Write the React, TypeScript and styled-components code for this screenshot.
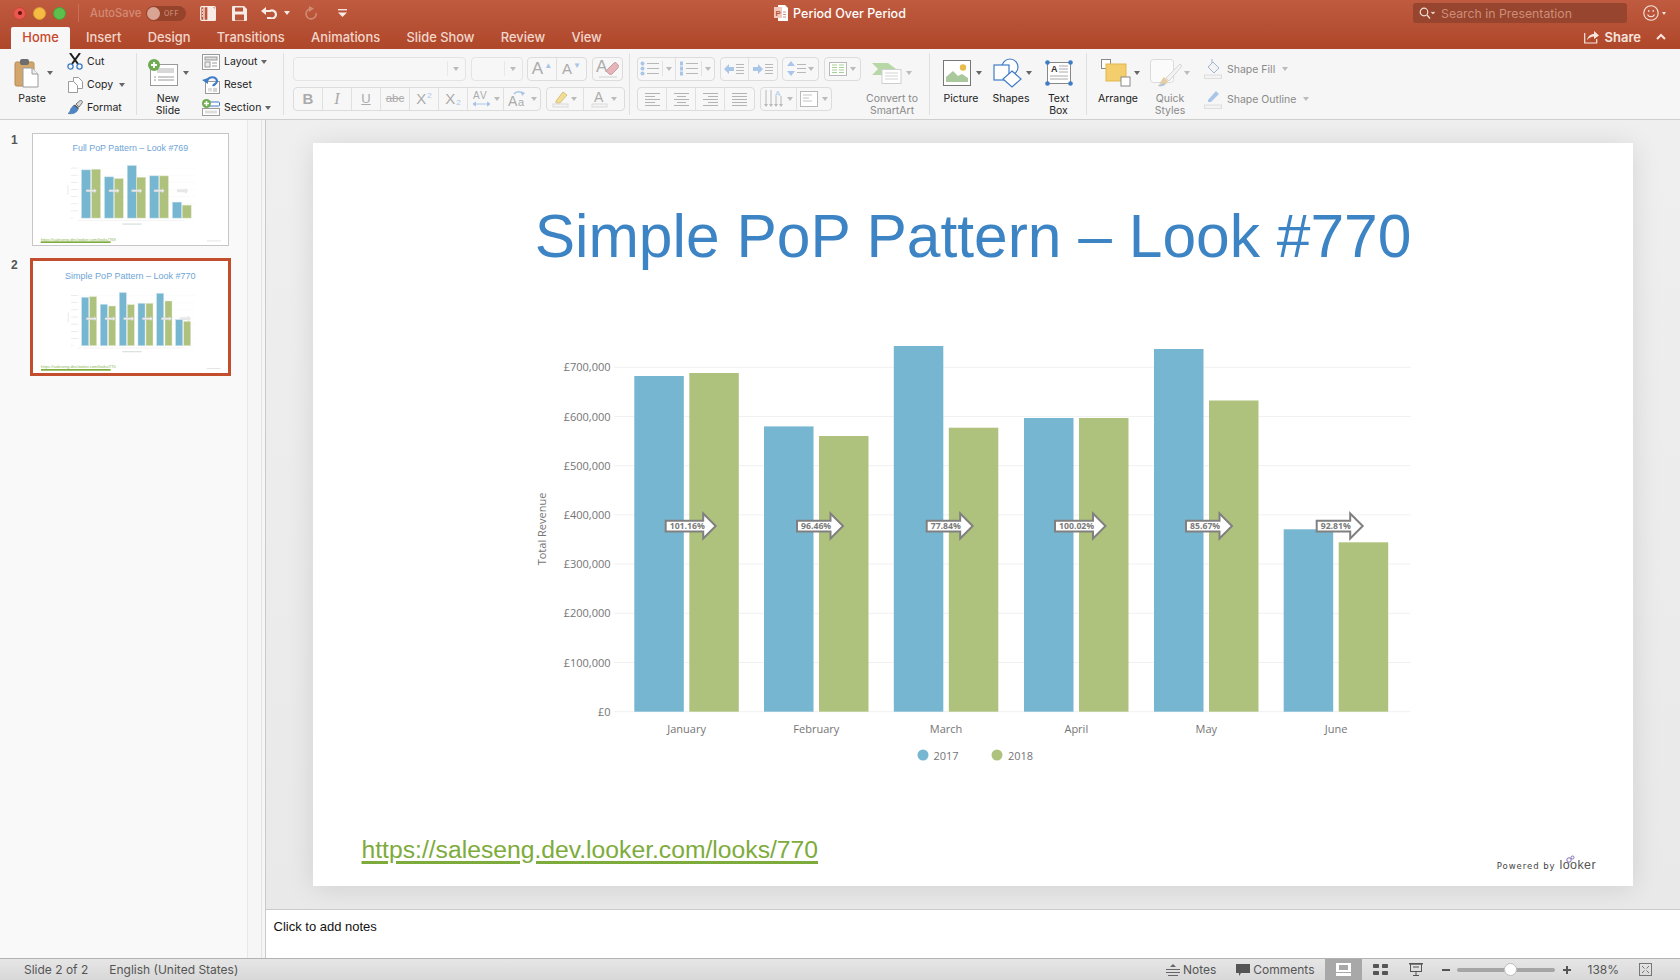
import React from "react";
import styled, { createGlobalStyle } from "styled-components";

const UI = `"Inter", "Liberation Sans", sans-serif`;

const Global = createGlobalStyle`
  html, body { margin: 0; padding: 0; width: 1680px; height: 980px; overflow: hidden; background: #f5f5f5; }
  * { box-sizing: border-box; }
  svg { display: block; flex: none; }
`;

const Page = styled.div`
  width: 1680px; height: 980px; display: flex; flex-direction: column; overflow: hidden;
  font-family: ${UI}; color: #222;
`;

/* ---------- Title bar ---------- */
const TitleBar = styled.header`
  height: 49px; flex: none; display: flex; flex-direction: column;
  background: linear-gradient(#bf5b40, #af472a);
`;
const TitleRow = styled.div`
  height: 27px; display: grid; grid-template-columns: 1fr auto 1fr; align-items: center; padding-bottom: 1px;
`;
const QuickBar = styled.div`display: flex; align-items: center; padding-left: 13px;`;
const Light = styled.span<{ $c: string; $b: string }>`
  width: 13px; height: 13px; border-radius: 50%; background: ${p => p.$c}; border: 1px solid ${p => p.$b};
  margin-right: 7px; display: flex; align-items: center; justify-content: center; flex: none;
  &:nth-child(3) { margin-right: 12px; }
`;
const LightDot = styled.span`width: 4px; height: 4px; border-radius: 50%; background: #6d0f0a;`;
const QuickDivider = styled.span`width: 1px; height: 18px; background: #c96f56; margin-right: 11px;`;
const AutoSave = styled.span`font-size: 11.2px; color: #d38b75; width: 56px; font-weight: 500;`;
const Toggle = styled.span`
  width: 40px; height: 15px; border-radius: 8px; background: #96432b; display: flex; align-items: center; gap: 4px;
  padding-left: 1px; font-size: 7px; color: #d79a87; letter-spacing: .5px; margin-right: 14px;
`;
const ToggleKnob = styled.span`width: 13px; height: 13px; border-radius: 50%; background: #d9a494;`;
const QuickIcon = styled.span<{ $mr: number }>`display: flex; margin-right: ${p => p.$mr}px;`;
const DocTitle = styled.div`
  display: flex; align-items: center; gap: 5px; color: #fff; font-size: 12.5px; font-weight: 500;
`;
const TitleRight = styled.div`display: flex; align-items: center; justify-content: flex-end; padding-right: 14px;`;
const SearchBox = styled.div`
  width: 214px; height: 20px; border-radius: 3px; background: #97452e; display: flex; align-items: center;
  padding-left: 6px; gap: 6px; color: #cf8d79; font-size: 12.3px; margin-right: 16px;
`;
const TabRow = styled.nav`height: 22px; display: flex; align-items: flex-end; padding-left: 11px; position: relative;`;
const Tab = styled.span<{ $active?: boolean }>`
  height: 22px; display: flex; align-items: center; font-size: 12.9px; font-weight: 500; padding-bottom: 2px;
  color: ${p => (p.$active ? "#c8482a" : "#f2d6cb")};
  background: ${p => (p.$active ? "#f7f7f7" : "transparent")};
  border-radius: 2px 2px 0 0;
  width: ${p => (p.$active ? "59px" : "auto")};
  justify-content: center;
  margin-right: ${p => (p.$active ? "16px" : "26.3px")};
`;
const ShareBox = styled.div`
  margin-left: auto; display: flex; align-items: center; color: #f7e6df; font-size: 13px; font-weight: 600;
  height: 22px; padding-right: 14px; padding-bottom: 3px; gap: 6px;
`;

/* ---------- Ribbon ---------- */
const Ribbon = styled.section`
  height: 71px; flex: none; display: flex; align-items: flex-start; background: #f6f6f6; border-bottom: 1px solid #cfcfcf;
`;
const Group = styled.div<{ $w: number; $pl?: number }>`
  width: ${p => p.$w}px; flex: none; display: flex; align-items: flex-start; padding-left: ${p => p.$pl ?? 0}px;
`;
const Separator = styled.span`width: 1px; height: 62px; margin-top: 4px; background: #e0e0e0; flex: none;`;
const BigButton = styled.div<{ $w: number }>`
  width: ${p => p.$w}px; flex: none; display: flex; flex-direction: column; padding-top: 4px;
`;
const IconRow = styled.div<{ $inset: number }>`
  height: 40px; display: flex; align-items: center; padding-left: ${p => p.$inset}px; padding-bottom: 1px;
`;
const BigLabel = styled.span<{ $off?: boolean }>`
  display: block; text-align: center; font-size: 10.5px; line-height: 12px; white-space: pre-line;
  color: ${p => (p.$off ? "#8a8a8a" : "#222")};
`;
const SmallStack = styled.div<{ $ml: number }>`margin-left: ${p => p.$ml}px; padding-top: 1px; display: flex; flex-direction: column;`;
const SmallRow = styled.div<{ $gap: number }>`
  height: 23px; display: flex; align-items: center; gap: ${p => p.$gap}px; font-size: 10.5px; color: #222;
`;
const SmallIconBox = styled.span<{ $w: number }>`width: ${p => p.$w}px; display: flex; justify-content: center; flex: none;`;
const CaretGlyph = styled.svg<{ $ml: number }>`margin-left: ${p => p.$ml}px;`;
const ControlStack = styled.div`padding-top: 8px; display: flex; flex-direction: column; gap: 6.5px;`;
const ControlRow = styled.div`display: flex; gap: 4.5px; height: 23.5px;`;
const Combo = styled.div<{ $w: number }>`
  width: ${p => p.$w}px; height: 100%; border: 1px solid #e4e4e4; border-radius: 4px; background: #f7f7f7;
  display: flex; justify-content: flex-end; align-items: center; padding-right: 6px;
`;
const ComboDivider = styled.span`width: 1px; height: 15px; background: #e8e8e8; margin-right: 5px;`;
const BtnGroup = styled.div`
  display: flex; height: 100%; border: 1px solid #dcdcdc; border-radius: 4px; overflow: hidden; background: #f7f7f7;
`;
const Cell = styled.span<{ $w: number; $serif?: boolean }>`
  width: ${p => p.$w}px; height: 100%; display: flex; align-items: center; justify-content: center; gap: 1px;
  border-right: 1px solid #e0e0e0; color: #ababab; font-size: 15px; flex: none; line-height: 1;
  font-family: ${p => (p.$serif ? `"Liberation Serif", serif` : `"Liberation Sans", sans-serif`)};
  &:last-child { border-right: 0; }
`;
const CellDivider = styled.span`width: 1px; height: 15px; background: #e2e2e2; margin: 0 1px 0 2px; flex: none;`;
const GrowA = styled.span`font-size: 17px;`;
const Bold = styled.b`font-size: 15px;`;
const Ital = styled.i`font-size: 16px;`;
const Under = styled.u`font-size: 13px;`;
const Strike = styled.s`font-size: 11.5px;`;
const Sup = styled.span`font-size: 8px; color: #a9c6e8; align-self: flex-start; margin-top: 4px;`;
const Sub = styled.span`font-size: 8px; color: #a9c6e8; align-self: flex-end; margin-bottom: 3px;`;
const ShapeStack = styled.div`margin: 5px 0 0 12px; display: flex; flex-direction: column;`;
const ShapeRow = styled.div`
  height: 30px; display: flex; align-items: center; gap: 5px; font-size: 10.5px; color: #8a8a8a;
`;

/* ---------- Main ---------- */
const Main = styled.main`flex: 1; display: flex; min-height: 0;`;
const Panel = styled.aside`
  width: 248px; flex: none; background: #f9f9f9; border-right: 1px solid #e8e8e8; padding: 12.5px 0 0 11px;
  display: flex; flex-direction: column; gap: 12.5px;
`;
const ThumbRow = styled.div`display: flex; align-items: flex-start;`;
const ThumbNumber = styled.span`
  width: 19px; font-size: 12px; font-weight: 700; color: #555;
  font-family: "Liberation Sans", sans-serif; line-height: 14px;
`;
const Thumb = styled.div<{ $selected?: boolean }>`
  width: ${p => (p.$selected ? 201 : 197)}px; height: ${p => (p.$selected ? 118 : 113)}px;
  margin-left: ${p => (p.$selected ? 0 : 2)}px; background: #fff;
  border: ${p => (p.$selected ? "3px solid #c24e2e" : "1px solid #c6c6c6")};
`;
const Gutter = styled.div`width: 18px; flex: none; background: #f6f6f6; border-right: 1px solid #c9c9c9;`;
const GutterLine = styled.div`width: 14px; height: 100%; border-right: 1px solid #e4e4e4;`;
const Workspace = styled.div`flex: 1; display: flex; flex-direction: column; min-width: 0;`;
const Canvas = styled.div`
  flex: 1; min-height: 0; display: flex; align-items: center; justify-content: center;
  background: linear-gradient(#efefef, #e9e9e9); 
`;
const Slide = styled.article`
  width: 1320px; height: 743px; flex: none; background: #fff; display: flex; flex-direction: column;
  box-shadow: 0 2px 26px rgba(0, 0, 0, .11);
`;
const SlideTitle = styled.h1`
  margin: 57px 0 28px; height: 72px; line-height: 72px; text-align: center; font-weight: 400; font-size: 60.5px;
  font-family: "Liberation Sans", Arial, sans-serif; color: #3d84c5;
`;
const ChartSvg = styled.svg`width: 1320px; height: 470px;`;
const AxisText = styled.text`font-family: "Open Sans", sans-serif; font-size: 11px; fill: #757575;`;
const ArrowText = styled.text`font-family: "Open Sans", sans-serif; font-size: 8.7px; font-weight: 700; fill: #7a7a7a;`;
const SlideFooter = styled.footer`
  margin-top: 60px; height: 40px; display: flex; justify-content: space-between; align-items: flex-end;
  padding: 0 37px 0 48.5px;
`;
const SlideLink = styled.a`
  font-family: "Liberation Sans", Arial, sans-serif; font-size: 24.7px; line-height: 40px; color: #7dab3c;
  text-decoration: underline; text-decoration-thickness: 3px; text-underline-offset: 3px;
`;
const Powered = styled.div`
  display: flex; align-items: baseline; gap: 4px; font-family: "DejaVu Sans", sans-serif; font-size: 8.5px;
  letter-spacing: .95px; color: #444; font-weight: 500; height: 10px; line-height: 10px; position: relative;
`;
const LookerWord = styled.span`font-family: "Liberation Sans", sans-serif; font-size: 12.5px; color: #555; letter-spacing: .4px;`;
const LookerMark = styled.svg`position: absolute; right: 20px; top: -5px;`;
const NotesBar = styled.div`
  height: 49px; flex: none; background: #fff; border-top: 1px solid #cbcbcb; padding: 9px 0 0 7.5px;
  font-family: "Liberation Sans", sans-serif; font-size: 13px; color: #111; line-height: 16px;
`;

/* ---------- Status bar ---------- */
const StatusBar = styled.footer`
  height: 22px; flex: none; display: flex; justify-content: space-between; align-items: stretch;
  background: linear-gradient(#e6e6e6, #d8d8d8); border-top: 1px solid #b2b2b2; color: #555; font-size: 12px;
`;
const StatusSide = styled.div<{ $pl?: number; $pr?: number }>`
  display: flex; align-items: center; padding: 0 ${p => p.$pr ?? 0}px 0 ${p => p.$pl ?? 0}px;
`;
const StatusItem = styled.span<{ $ml?: number }>`
  margin-left: ${p => p.$ml ?? 0}px; display: flex; align-items: center; gap: 3px; white-space: nowrap; flex: none;
`;
const ViewActive = styled.span`
  width: 37px; height: 100%; margin-left: 10px; background: #a8a8a8; display: flex; align-items: center; justify-content: center; flex: none;
`;
const ZoomTrack = styled.span`
  width: 98px; height: 4px; border-radius: 2px; background: #a5a5a5; margin-left: 7px; position: relative; flex: none;
`;
const ZoomKnob = styled.span`
  position: absolute; left: 47px; top: -4.5px; width: 13px; height: 13px; border-radius: 50%; background: #fff; border: 1px solid #bdbdbd;
`;

/* ---------- Icons ---------- */
const Caret = ({ ml = 3, c = "#666" }: { ml?: number; c?: string }) => (
  <CaretGlyph $ml={ml} width="6" height="4" viewBox="0 0 6 4"><path d="M0 0h6L3 4z" fill={c} /></CaretGlyph>
);

const Paste = () => (
  <svg width="26" height="30" viewBox="0 0 26 30">
    <rect x="1" y="4" width="19" height="24" rx="1.5" fill="#d3a76b" stroke="#b58a50" />
    <rect x="6" y="1" width="9" height="6" rx="2" fill="#6d6d6d" />
    <path d="M9 10h9l6 6v13H9z" fill="#fff" stroke="#9a9a9a" /><path d="M18 10v6h6" fill="#eee" stroke="#9a9a9a" />
  </svg>
);
const Cut = () => (
  <svg width="16" height="17" viewBox="0 0 16 17">
    <path d="M3 0l8 11M13 0L5 11" stroke="#1d1d1d" strokeWidth="2" />
    <circle cx="3.5" cy="13.5" r="2.6" fill="none" stroke="#3e7cc6" strokeWidth="1.3" />
    <circle cx="12.5" cy="13.5" r="2.6" fill="none" stroke="#3e7cc6" strokeWidth="1.3" />
  </svg>
);
const CopyI = () => (
  <svg width="15" height="16" viewBox="0 0 15 16" fill="#fff" stroke="#9b9b9b">
    <path d="M5.5.5h5l4 4v7h-9z" /><path d="M.5 4.5h5l4 4v7h-9z" />
  </svg>
);
const Brush = () => (
  <svg width="17" height="15" viewBox="0 0 17 15">
    <path d="M9 4l4-3.5c1-.8 3 1 2.3 2.2L12 7z" fill="#d8d8d8" stroke="#777" />
    <path d="M8 4.5L12 8l-1 1.5-4.5-4z" fill="#555" />
    <path d="M6.5 5.5L11 9.500c-1 3-5 5-10 4 2-1 2-3 3-5z" fill="#4d86c6" stroke="#3a6da8" strokeWidth=".6" />
  </svg>
);
const NewSlideI = () => (
  <svg width="30" height="27" viewBox="0 0 30 27">
    <rect x="2.500" y="5.500" width="27" height="21" fill="#fff" stroke="#9a9a9a" />
    <rect x="9" y="9" width="17" height="5" fill="#d7d7d7" />
    <path d="M6 18h2M10 18h16M6 21h2M10 21h16" stroke="#9a9a9a" />
    <circle cx="6" cy="6" r="6" fill="#6fab50" />
    <path d="M6 3v6M3 6h6" stroke="#fff" strokeWidth="1.8" />
  </svg>
);
const LayoutI = () => (
  <svg width="18" height="16" viewBox="0 0 18 16" fill="none" stroke="#9a9a9a">
    <rect x=".5" y=".5" width="17" height="15" fill="#fff" />
    <rect x="3" y="3" width="12" height="3" fill="#ddd" /><rect x="3" y="8" width="5" height="5" fill="#eee" /><path d="M10 9h5M10 12h5" />
  </svg>
);
const ResetI = () => (
  <svg width="18" height="18" viewBox="0 0 18 18">
    <rect x="3.500" y="5.500" width="14" height="12" fill="#fff" stroke="#9a9a9a" />
    <rect x="6" y="12" width="4" height="3.500" fill="#ddd" /><path d="M11 13h4M11 15h4" stroke="#aaa" />
    <path d="M5 5c2-5 9-5 10 0 0 3-3 3-4 5" fill="none" stroke="#3e7cc6" strokeWidth="2.200" />
    <path d="M0 4l6-2v6z" fill="#3e7cc6" />
  </svg>
);
const SectionI = () => (
  <svg width="18" height="17" viewBox="0 0 18 17">
    <rect x="5" y="3" width="12.500" height="4" rx="1" fill="#fff" stroke="#3e7cc6" />
    <rect x=".5" y="9.500" width="17" height="7" fill="#fff" stroke="#9a9a9a" /><rect x="3" y="11.500" width="12" height="3" fill="#ddd" />
    <circle cx="4.500" cy="4.500" r="4.500" fill="#6fab50" /><path d="M4.500 2v5M2 4.500h5" stroke="#fff" strokeWidth="1.500" />
  </svg>
);
const Lines = ({ rows, w = 15, c = "#b3b3b3" }: { rows: [number, number, number][]; w?: number; c?: string }) => (
  <svg width={w} height="14" viewBox={`0 0 ${w} 14`} stroke={c}>
    {rows.map(([x1, x2, y], i) => <path key={i} d={`M${x1} ${y + .5}H${x2}`} />)}
  </svg>
);
const BulletI = ({ n }: { n?: boolean }) => (
  <svg width="19" height="15" viewBox="0 0 19 15">
    {[2.5, 7.5, 12.5].map(y => n
      ? <rect key={y} x="1" y={y - 2} width="3" height="4" fill="#a9c6e8" />
      : <circle key={y} cx="2.500" cy={y} r="2" fill="#a9c6e8" />)}
    <path d="M7 2.500h12M7 7.500h12M7 12.500h12" stroke="#b8b8b8" />
  </svg>
);
const IndentI = ({ right }: { right?: boolean }) => (
  <svg width="20" height="12" viewBox="0 0 20 12">
    <path d={right ? "M0 4h5V1l5 5-5 5V8H0z" : "M10 4H5V1L0 6l5 5V8h5z"} fill="#a9c6e8" />
    <path d="M12 1.500h8M12 4.500h8M12 7.500h8M12 10.500h8" stroke="#b8b8b8" />
  </svg>
);
const SpacingI = () => (
  <svg width="19" height="15" viewBox="0 0 19 15">
    <path d="M4 0l4 5H0zM4 15l4-5H0z" fill="#a9c6e8" /><path d="M10 3.500h9M10 7.500h9M10 11.500h9" stroke="#b8b8b8" />
  </svg>
);
const ColumnsI = () => (
  <svg width="18" height="14" viewBox="0 0 18 14">
    <rect x=".5" y=".5" width="17" height="13" fill="#fff" stroke="#b8b8b8" />
    <path d="M3 3h5M3 5.500h5M3 8h5M3 10.500h5M10 3h5M10 5.500h5M10 8h5M10 10.500h5" stroke="#a7cf93" />
  </svg>
);
const VAlignI = () => (
  <svg width="22" height="20" viewBox="0 0 22 20">
    <path d="M2 1v15M7 1v15M12 7v9M17 7v9" stroke="#b8b8b8" />
    <path d="M0 15h4l-2 3zM5 15h4l-2 3zM10 15h4l-2 3zM15 15h4l-2 3z" fill="#b8b8b8" />
    <text x="11" y="6.500" fontSize="8" fill="#a9c6e8" fontFamily="Liberation Sans">A</text>
  </svg>
);
const TextDirI = () => (
  <svg width="18" height="16" viewBox="0 0 18 16">
    <rect x=".5" y=".5" width="17" height="15" fill="#fff" stroke="#b8b8b8" /><path d="M3 4h9M3 7h6M3 10h9" stroke="#c3c3c3" />
  </svg>
);
const HighlightI = () => (
  <svg width="18" height="18" viewBox="0 0 18 18">
    <path d="M4 11l7-9 4 3-7 8H4z" fill="#f2dd95" stroke="#d6c27d" />
    <rect x="1" y="14" width="15" height="3" fill="#f3f3f3" stroke="#d9d9d9" />
  </svg>
);
const FontColorI = () => (
  <svg width="17" height="18" viewBox="0 0 17 18">
    <text x="3" y="12" fontSize="14" fill="#ababab" fontFamily="Liberation Sans">A</text>
    <rect x="1" y="14" width="15" height="3" fill="#f3f3f3" stroke="#d9d9d9" />
  </svg>
);
const SpacingAV = () => (
  <svg width="19" height="18" viewBox="0 0 19 18">
    <text x="1" y="9" fontSize="10" letterSpacing="1" fill="#ababab" fontFamily="Liberation Sans">AV</text>
    <path d="M1 14h17M1 14l2.500-2v4zM18 14l-2.500-2v4z" stroke="#a9c6e8" fill="#a9c6e8" />
  </svg>
);
const CaseI = () => (
  <svg width="20" height="18" viewBox="0 0 20 18">
    <text x="0" y="16" fontSize="14" fill="#ababab" fontFamily="Liberation Sans">A</text>
    <text x="10" y="16" fontSize="11" fill="#ababab" fontFamily="Liberation Sans">a</text>
    <path d="M6 4c2-3 7-3 9 0" fill="none" stroke="#a9c6e8" strokeWidth="1.400" /><path d="M13 1l4 2-3 3z" fill="#a9c6e8" />
  </svg>
);
const EraserI = () => (
  <svg width="24" height="21" viewBox="0 0 24 21">
    <text x="1" y="14" fontSize="17" fill="#ababab" fontFamily="Liberation Sans">A</text>
    <path d="M12 12l7-7c1-1 3 0 4 2s0 3-1 4l-5 5c-1 1-3 0-4-1s-2-2-1-3z" fill="#e6b4b9" stroke="#c79aa0" />
    <path d="M4 19h18" stroke="#cfcfcf" />
  </svg>
);
const SmartArtI = () => (
  <svg width="30" height="22" viewBox="0 0 30 22">
    <path d="M0 1h16l8 6-8 6H0l6-6z" fill="#b8d7a6" />
    <rect x="10" y="7.500" width="19" height="14" fill="#fff" stroke="#cfcfcf" />
    <path d="M13 11h13M13 14h13M13 17h13" stroke="#d3d3d3" />
  </svg>
);
const PictureI = () => (
  <svg width="28" height="26" viewBox="0 0 28 26">
    <rect x=".5" y=".5" width="27" height="25" fill="#fff" stroke="#777" />
    <circle cx="20" cy="7.500" r="3.200" fill="#e8bb4a" />
    <path d="M3 22v-5l7-6 5 5 4-2 6 4v4z" fill="#a9c89b" />
  </svg>
);
const ShapesI = () => (
  <svg width="29" height="30" viewBox="0 0 29 30" fill="#fff" stroke="#3e7cc6" strokeWidth="1.200">
    <circle cx="17" cy="9" r="8" />
    <rect x="1" y="7" width="15" height="15" />
    <path d="M19 13l9 8-9 8-9-8z" />
  </svg>
);
const TextBoxI = () => (
  <svg width="28" height="26" viewBox="0 0 28 26">
    <rect x="2.500" y="2.500" width="23" height="21" fill="#fff" stroke="#888" />
    <text x="6" y="12" fontSize="9" fontWeight="700" fill="#333" fontFamily="Liberation Sans">A</text>
    <path d="M14 6h9M14 9h9M14 12h9M5 16h18M5 19h18" stroke="#aaa" />
    {[[2.500, 2.500], [25.500, 2.500], [2.500, 23.500], [25.500, 23.500]].map(([x, y]) => <circle key={`${x}${y}`} cx={x} cy={y} r="2.300" fill="#3e7cc6" />)}
  </svg>
);
const ArrangeI = () => (
  <svg width="30" height="28" viewBox="0 0 30 28">
    <rect x=".5" y=".5" width="9" height="9" fill="#fff" stroke="#888" />
    <rect x="5" y="5" width="20" height="17" fill="#f4ce6c" stroke="#e1b750" />
    <rect x="20" y="18" width="9" height="9" fill="#fff" stroke="#888" />
  </svg>
);
const QuickI = () => (
  <svg width="34" height="28" viewBox="0 0 34 28">
    <rect x=".5" y=".5" width="23" height="23" rx="3" fill="#fbfbfb" stroke="#dadada" />
    <path d="M32 7L19 22l-3-3L30 5z" fill="#f3f3f3" stroke="#d6d6d6" />
    <path d="M14 18l4 4c-1 4-5 5-10 5 2-2 3-6 6-9z" fill="#e5cda4" />
    <path d="M8 27c3-1 4-2 6-3l1 2c-2 1-5 2-7 1z" fill="#a9c6e8" />
  </svg>
);
const FillI = () => (
  <svg width="18" height="20" viewBox="0 0 18 20">
    <path d="M4 8l5-5 6 6-5 5z" fill="#f3f3f3" stroke="#9fb6d3" /><path d="M8 4V0" stroke="#9fb6d3" />
    <rect x=".5" y="16" width="17" height="3.500" fill="#f3f3f3" stroke="#dedede" />
  </svg>
);
const OutlineI = () => (
  <svg width="18" height="20" viewBox="0 0 18 20">
    <path d="M4 11L12 2l3 3-8 8H4z" fill="#a9c6e8" />
    <rect x=".5" y="16" width="17" height="3.500" fill="#f3f3f3" stroke="#dedede" />
  </svg>
);
const White = "#f8ece7";
const SidebarI = () => (
  <svg width="16" height="15" viewBox="0 0 16 15" fill="none" stroke={White} strokeWidth="1.300">
    <rect x=".7" y=".7" width="14.600" height="13.600" rx="1" /><path d="M4 1v13M2 4h1M2 7h1M2 10h1" /><path d="M8 1h4l3 3v10H8z" fill={White} />
  </svg>
);
const SaveI = () => (
  <svg width="15" height="15" viewBox="0 0 15 15">
    <path d="M1 0h11l3 3v11a1 1 0 0 1-1 1H1a1 1 0 0 1-1-1V1a1 1 0 0 1 1-1z" fill={White} />
    <rect x="3" y="1.500" width="8" height="4" fill="#b9553a" /><rect x="3" y="8.500" width="9" height="6" fill="#b9553a" />
  </svg>
);
const UndoI = () => (
  <svg width="16" height="12" viewBox="0 0 16 12" fill="none">
    <path d="M0 4l5-4v8z" fill={White} /><path d="M4 4h5a4 4 0 1 1 0 7H6" stroke={White} strokeWidth="2.200" />
  </svg>
);
const RedoI = () => (
  <svg width="13" height="14" viewBox="0 0 13 14" fill="none">
    <path d="M8 3a5 5 0 1 0 4 4" stroke="#cf8a74" strokeWidth="1.600" /><path d="M5 0l5 2.500L5 6z" fill="#cf8a74" />
  </svg>
);
const CustomI = () => (
  <svg width="9" height="8" viewBox="0 0 9 8"><path d="M0 .7h9" stroke={White} strokeWidth="1.300" /><path d="M0 3.500h9L4.500 8z" fill={White} /></svg>
);
const PptI = () => (
  <svg width="14" height="16" viewBox="0 0 14 16">
    <path d="M4 0h7l3 3v13H4z" fill="#fff" /><rect x="0" y="2" width="8" height="11" fill="#f1c9bc" />
    <text x="1.500" y="10.500" fontSize="8" fontWeight="700" fill="#b9553a" fontFamily="Liberation Sans">P</text>
    <path d="M9 7h3M9 9.500h3M9 12h3" stroke="#c98" />
  </svg>
);
const SearchI = () => (
  <svg width="16" height="12" viewBox="0 0 16 12" fill="none" stroke="#f1e1da" strokeWidth="1.200">
    <circle cx="5" cy="5" r="3.800" /><path d="M8 8l3 3.500M12.500 5l1.500 1.500L15.500 5" />
  </svg>
);
const Smiley = () => (
  <svg width="23" height="16" viewBox="0 0 23 16" fill="none" stroke="#f6e6df" strokeWidth="1.100">
    <circle cx="8" cy="8" r="7.200" /><path d="M4.500 9.500c1.500 3 5.500 3 7 0" /><path d="M5.800 5v2M10.200 5v2" />
    <path d="M19 7h4l-2 3z" fill="#f6e6df" stroke="none" />
  </svg>
);
const ShareI = () => (
  <svg width="15" height="14" viewBox="0 0 15 14" fill="none">
    <path d="M.7 3v10h12V9" stroke="#f7e6df" strokeWidth="1.200" />
    <path d="M3 10c1-4 4-6 7-6V1l5 4.500L10 9V6.500C7 6.500 5 8 3 10z" fill="#f7e6df" />
  </svg>
);
const ChevronGlyph = styled.svg`margin-left: 9px;`;
const Chevron = () => (
  <ChevronGlyph width="10" height="7" viewBox="0 0 10 7" fill="none"><path d="M1 6l4-4 4 4" stroke="#f7e6df" strokeWidth="2" /></ChevronGlyph>
);
const NotesI = () => (
  <svg width="14" height="12" viewBox="0 0 14 12" stroke="#666"><path d="M7 0l3 3H4z" fill="#666" stroke="none" /><path d="M0 5.500h14M0 8.500h14M2 11.500h10" /></svg>
);
const CommentI = () => (
  <svg width="14" height="12" viewBox="0 0 14 12"><path d="M0 0h14v9H5l-2 3V9H0z" fill="#555" /></svg>
);
const NormalI = () => (
  <svg width="15" height="13" viewBox="0 0 15 13"><rect width="15" height="13" fill="#fff" /><rect x="3" y="2" width="9" height="5" fill="#a8a8a8" /><rect y="9" width="15" height="1" fill="#a8a8a8" /></svg>
);
const GridI = () => (
  <svg width="15" height="11" viewBox="0 0 15 11" fill="#555"><rect width="6" height="4" rx=".8" /><rect x="9" width="6" height="4" rx=".8" /><rect y="7" width="6" height="4" rx=".8" /><rect x="9" y="7" width="6" height="4" rx=".8" /></svg>
);
const PresentI = () => (
  <svg width="14" height="13" viewBox="0 0 14 13" fill="none" stroke="#555"><path d="M0 .7h14" strokeWidth="1.400" /><rect x="1.500" y="1" width="11" height="7.500" /><path d="M4 4h6" /><path d="M7 8.500v4M4 12.500h6" /></svg>
);
const Minus = () => <svg width="8" height="8" viewBox="0 0 8 8"><path d="M0 4h8" stroke="#555" strokeWidth="2" /></svg>;
const Plus = () => <svg width="8" height="8" viewBox="0 0 8 8"><path d="M0 4h8M4 0v8" stroke="#555" strokeWidth="2" /></svg>;
const FitI = () => (
  <svg width="13" height="13" viewBox="0 0 13 13" fill="none" stroke="#777"><rect x=".5" y=".5" width="12" height="12" /><path d="M3 3l2.500 2.500M10 3L7.500 5.500M3 10l2.500-2.500M10 10L7.500 7.500" /></svg>
);

/* ---------- Chart ---------- */
const blueTops = [376, 426.4, 346, 418, 349, 529.3];
const greenTops = [373, 436, 427.7, 418, 400.5, 542.3];
const lefts = [634.3, 764, 893.8, 1024, 1154, 1283.7];
const months = ["January", "February", "March", "April", "May", "June"];
const arrows: [number, number, string][] = [
  [665.7, 50, "101.16%"], [797, 46, "96.46%"], [926.7, 46, "77.84%"],
  [1055, 50.5, "100.02%"], [1186, 46, "85.67%"], [1316.7, 46, "92.81%"],
];
const ticks = ["£0", "£100,000", "£200,000", "£300,000", "£400,000", "£500,000", "£600,000", "£700,000"];
const Y0 = 711.7;
const STEP = 49.2;

const Chart = () => (
  <ChartSvg viewBox="313 300 1320 470">
    {ticks.map((t, i) => (
      <g key={t}>
        <path d={`M614 ${Y0 - i * STEP}H1410.500`} stroke="#f1f1f1" strokeWidth="1" />
        <AxisText x="610.500" y={Y0 - i * STEP + 4} textAnchor="end">{t}</AxisText>
      </g>
    ))}
    <AxisText transform="translate(546 529) rotate(-90)" textAnchor="middle">Total Revenue</AxisText>
    {months.map((m, i) => (
      <g key={m}>
        <rect x={lefts[i]} y={blueTops[i]} width="49.500" height={Y0 - blueTops[i]} fill="#77b6d1" />
        <rect x={lefts[i] + 55} y={greenTops[i]} width="49.500" height={Y0 - greenTops[i]} fill="#afc27d" />
        <AxisText x={lefts[i] + 52.3} y="732.500" textAnchor="middle">{m}</AxisText>
      </g>
    ))}
    {arrows.map(([x, w, label]) => (
      <g key={label}>
        <path d={`M${x} 520.700H${x + w - 12.5}V513.500L${x + w} 526L${x + w - 12.5} 538.500V531.500H${x}Z`} fill="#fff" stroke="#808080" strokeWidth="2" />
        <ArrowText x={x + 4} y="529">{label}</ArrowText>
      </g>
    ))}
    <circle cx="923" cy="755" r="5.500" fill="#77b6d1" />
    <AxisText x="933.500" y="759.500">2017</AxisText>
    <circle cx="997" cy="755" r="5.500" fill="#afc27d" />
    <AxisText x="1008" y="759.500">2018</AxisText>
  </ChartSvg>
);

/* ---------- Thumbnails (drawn in a shared scale) ---------- */
const ThumbTitle = styled.text<{ $size: number }>`font-family: "Liberation Sans", sans-serif; font-size: ${p => p.$size}px; fill: #6ea4d6;`;
const ThumbLink = styled.text`font-family: "Liberation Sans", sans-serif; font-size: 12.200px; fill: #8cb654;`;

type ThumbData = {
  view: string; title: string; titleY: number; titleSize: number; bottom: number; link: string; linkY: number; arrowY: number; gridR: number;
  bars: [number, number, number][];
};
const thumb1: ThumbData = {
  view: "100 40 583 334", title: "Full PoP Pattern – Look #769", titleY: 91, titleSize: 26.5, bottom: 293, link: "https://saleseng.dev.looker.com/looks/769", linkY: 362, arrowY: 211, gridR: 585,
  bars: [[245, 148, 0], [275, 146, 1], [314, 169, 0], [343, 174, 1], [382, 135, 0], [410, 170, 1], [449, 166, 0], [478, 166, 1], [517, 245, 0], [546, 254, 1]],
};
const thumb2: ThumbData = {
  view: "99 423 585 336", title: "Simple PoP Pattern – Look #770", titleY: 477, titleSize: 27, bottom: 677, link: "https://saleseng.dev.looker.com/looks/770", linkY: 746, arrowY: 596, gridR: 585,
  bars: [[245, 532, 0], [269, 530, 1], [301, 553, 0], [326, 558, 1], [358, 518, 0], [382, 554, 1], [414, 550, 0], [438, 550, 1], [470, 520, 0], [495, 543, 1], [527, 599, 0], [551, 604, 1]],
};
const ThumbArt = ({ d, barW, arrows: ax }: { d: ThumbData; barW: number; arrows: number[] }) => (
  <svg width="100%" height="100%" viewBox={d.view} preserveAspectRatio="none">
    <ThumbTitle $size={d.titleSize} x="391" y={d.titleY} textAnchor="middle">{d.title}</ThumbTitle>
    {[0, 1, 2, 3, 4, 5, 6, 7].map(i => (
      <g key={i}>
        <path d={`M238 ${d.bottom - i * 21.500}H${d.gridR}`} stroke="#f3f3f3" />
        <rect x="213" y={d.bottom - i * 21.500 - 1} width={i ? 21 : 6} height="2" fill="#e4e4e4" />
      </g>
    ))}
    <rect x="203" y={d.bottom - 100} width="3" height="30" fill="#e9e9e9" />
    {d.bars.map(([x, top, g]) => (
      <rect key={x} x={x} y={top} width={barW} height={d.bottom - top} fill={g ? "#afc27d" : "#77b6d1"} stroke={g ? "#e2e9cf" : "#c4e0ec"} strokeWidth="1.500" />
    ))}
    {ax.map(x => (
      <path key={x} d={`M${x} ${d.arrowY - 3}h24v-4l7 7-7 7v-4h-24z`} fill="#ececec" stroke="#c9c9c9" strokeWidth="1" />
    ))}
    <rect x="367" y={d.bottom + 16} width="58" height="4" fill="#d9e4e0" />
    <rect x="233" y={d.bottom + 6} width="320" height="2" fill="#eeeeee" />
    <ThumbLink x="123" y={d.linkY - 1}>{d.link}</ThumbLink>
    <rect x="123" y={d.linkY + 1} width="209" height="5" fill="#7dab3c" />
    <rect x="620" y={d.linkY - 2} width="42" height="3" fill="#e6e6e6" />
  </svg>
);

/* ---------- App ---------- */
const App = () => (
  <Page>
    <Global />
    <TitleBar>
      <TitleRow>
        <QuickBar>
          <Light $c="#e9584f" $b="#c74438"><LightDot /></Light>
          <Light $c="#f5bb43" $b="#d99c30" />
          <Light $c="#5ec04c" $b="#46a337" />
          <QuickDivider />
          <AutoSave>AutoSave</AutoSave>
          <Toggle><ToggleKnob />OFF</Toggle>
          <QuickIcon $mr={16}><SidebarI /></QuickIcon>
          <QuickIcon $mr={14}><SaveI /></QuickIcon>
          <QuickIcon $mr={0}><UndoI /></QuickIcon>
          <QuickIcon $mr={14}><Caret ml={7} c={White} /></QuickIcon>
          <QuickIcon $mr={21}><RedoI /></QuickIcon>
          <QuickIcon $mr={0}><CustomI /></QuickIcon>
        </QuickBar>
        <DocTitle><PptI />Period Over Period</DocTitle>
        <TitleRight>
          <SearchBox><SearchI />Search in Presentation</SearchBox>
          <Smiley />
        </TitleRight>
      </TitleRow>
      <TabRow>
        <Tab $active>Home</Tab>
        <Tab>Insert</Tab>
        <Tab>Design</Tab>
        <Tab>Transitions</Tab>
        <Tab>Animations</Tab>
        <Tab>Slide Show</Tab>
        <Tab>Review</Tab>
        <Tab>View</Tab>
        <ShareBox><ShareI />Share<Chevron /></ShareBox>
      </TabRow>
    </TitleBar>

    <Ribbon>
      <Group $w={136}>
        <BigButton $w={64}>
          <IconRow $inset={14}><Paste /><Caret ml={7} /></IconRow>
          <BigLabel>Paste</BigLabel>
        </BigButton>
        <SmallStack $ml={3}>
          <SmallRow $gap={4}><SmallIconBox $w={16}><Cut /></SmallIconBox>Cut</SmallRow>
          <SmallRow $gap={4}><SmallIconBox $w={16}><CopyI /></SmallIconBox>Copy<Caret ml={2} /></SmallRow>
          <SmallRow $gap={4}><SmallIconBox $w={16}><Brush /></SmallIconBox>Format</SmallRow>
        </SmallStack>
      </Group>
      <Separator />
      <Group $w={146}>
        <BigButton $w={62}>
          <IconRow $inset={11}><NewSlideI /><Caret ml={5} /></IconRow>
          <BigLabel>{"New\nSlide"}</BigLabel>
        </BigButton>
        <SmallStack $ml={3}>
          <SmallRow $gap={4}><SmallIconBox $w={18}><LayoutI /></SmallIconBox>Layout<Caret ml={0} /></SmallRow>
          <SmallRow $gap={4}><SmallIconBox $w={18}><ResetI /></SmallIconBox>Reset</SmallRow>
          <SmallRow $gap={4}><SmallIconBox $w={18}><SectionI /></SmallIconBox>Section<Caret ml={0} /></SmallRow>
        </SmallStack>
      </Group>
      <Separator />
      <Group $w={345} $pl={9}>
        <ControlStack>
          <ControlRow>
            <Combo $w={173}><ComboDivider /><Caret ml={0} c="#bbb" /></Combo>
            <Combo $w={52}><ComboDivider /><Caret ml={0} c="#bbb" /></Combo>
            <BtnGroup>
              <Cell $w={29}><GrowA>A</GrowA><Sup>▲</Sup></Cell>
              <Cell $w={29}>A<Sup>▼</Sup></Cell>
            </BtnGroup>
            <BtnGroup><Cell $w={29}><EraserI /></Cell></BtnGroup>
          </ControlRow>
          <ControlRow>
            <BtnGroup>
              <Cell $w={29}><Bold>B</Bold></Cell>
              <Cell $w={29} $serif><Ital>I</Ital></Cell>
              <Cell $w={29}><Under>U</Under></Cell>
              <Cell $w={29}><Strike>abc</Strike></Cell>
              <Cell $w={29}>X<Sup>2</Sup></Cell>
              <Cell $w={29}>X<Sub>2</Sub></Cell>
              <Cell $w={36}><SpacingAV /><Caret ml={2} c="#bbb" /></Cell>
              <Cell $w={36}><CaseI /><Caret ml={2} c="#bbb" /></Cell>
            </BtnGroup>
            <BtnGroup>
              <Cell $w={37}><HighlightI /><Caret ml={0} c="#bbb" /></Cell>
              <Cell $w={40}><FontColorI /><Caret ml={2} c="#bbb" /></Cell>
            </BtnGroup>
          </ControlRow>
        </ControlStack>
      </Group>
      <Separator />
      <Group $w={299} $pl={7}>
        <ControlStack>
          <ControlRow>
            <BtnGroup>
              <Cell $w={37.500}><BulletI /><CellDivider /><Caret ml={1} c="#bbb" /></Cell>
              <Cell $w={38.500}><BulletI n /><CellDivider /><Caret ml={1} c="#bbb" /></Cell>
            </BtnGroup>
            <BtnGroup>
              <Cell $w={28}><IndentI /></Cell>
              <Cell $w={28}><IndentI right /></Cell>
            </BtnGroup>
            <BtnGroup><Cell $w={35}><SpacingI /><Caret ml={1} c="#bbb" /></Cell></BtnGroup>
            <BtnGroup><Cell $w={35}><ColumnsI /><Caret ml={2} c="#bbb" /></Cell></BtnGroup>
          </ControlRow>
          <ControlRow>
            <BtnGroup>
              <Cell $w={29}><Lines rows={[[0, 15, 1], [0, 10, 4], [0, 15, 7], [0, 10, 10], [0, 15, 13]]} /></Cell>
              <Cell $w={29}><Lines rows={[[0, 15, 1], [3, 12, 4], [0, 15, 7], [3, 12, 10], [0, 15, 13]]} /></Cell>
              <Cell $w={29}><Lines rows={[[0, 15, 1], [5, 15, 4], [0, 15, 7], [5, 15, 10], [0, 15, 13]]} /></Cell>
              <Cell $w={29}><Lines rows={[[0, 15, 1], [0, 15, 4], [0, 15, 7], [0, 15, 10], [0, 15, 13]]} /></Cell>
            </BtnGroup>
            <BtnGroup>
              <Cell $w={36}><VAlignI /><Caret ml={0} c="#bbb" /></Cell>
              <Cell $w={34}><TextDirI /><Caret ml={3} c="#bbb" /></Cell>
            </BtnGroup>
          </ControlRow>
        </ControlStack>
        <BigButton $w={63}>
          <IconRow $inset={11}><SmartArtI /><Caret ml={4} c="#bbb" /></IconRow>
          <BigLabel $off>{"Convert to\nSmartArt"}</BigLabel>
        </BigButton>
      </Group>
      <Separator />
      <Group $w={156} $pl={1}>
        <BigButton $w={60}>
          <IconRow $inset={12}><PictureI /><Caret ml={5} /></IconRow>
          <BigLabel>Picture</BigLabel>
        </BigButton>
        <BigButton $w={40}>
          <IconRow $inset={2}><ShapesI /><Caret ml={4} /></IconRow>
          <BigLabel>Shapes</BigLabel>
        </BigButton>
        <BigButton $w={55}>
          <IconRow $inset={14}><TextBoxI /></IconRow>
          <BigLabel>{"Text\nBox"}</BigLabel>
        </BigButton>
      </Group>
      <Separator />
      <Group $w={300} $pl={1}>
        <BigButton $w={60}>
          <IconRow $inset={13}><ArrangeI /><Caret ml={3} /></IconRow>
          <BigLabel>Arrange</BigLabel>
        </BigButton>
        <BigButton $w={44}>
          <IconRow $inset={2}><QuickI /><Caret ml={0} c="#bbb" /></IconRow>
          <BigLabel $off>{"Quick\nStyles"}</BigLabel>
        </BigButton>
        <ShapeStack>
          <ShapeRow><FillI />Shape Fill<Caret ml={2} c="#bbb" /></ShapeRow>
          <ShapeRow><OutlineI />Shape Outline<Caret ml={2} c="#bbb" /></ShapeRow>
        </ShapeStack>
      </Group>
    </Ribbon>

    <Main>
      <Panel>
        <ThumbRow>
          <ThumbNumber>1</ThumbNumber>
          <Thumb><ThumbArt d={thumb1} barW={27} arrows={[259, 327, 395, 462, 532]} /></Thumb>
        </ThumbRow>
        <ThumbRow>
          <ThumbNumber>2</ThumbNumber>
          <Thumb $selected><ThumbArt d={thumb2} barW={21} arrows={[259, 315, 371, 427, 484, 541]} /></Thumb>
        </ThumbRow>
      </Panel>
      <Gutter><GutterLine /></Gutter>
      <Workspace>
        <Canvas>
          <Slide>
            <SlideTitle>Simple PoP Pattern – Look #770</SlideTitle>
            <Chart />
            <SlideFooter>
              <SlideLink>https://saleseng.dev.looker.com/looks/770</SlideLink>
              <Powered>
                Powered by <LookerWord>looker</LookerWord>
                <LookerMark width="10" height="8" viewBox="0 0 10 8" fill="none" stroke="#7f6fb0"><circle cx="3" cy="5" r="2.200" /><circle cx="6.500" cy="2.500" r="1.500" /></LookerMark>
              </Powered>
            </SlideFooter>
          </Slide>
        </Canvas>
        <NotesBar>Click to add notes</NotesBar>
      </Workspace>
    </Main>

    <StatusBar>
      <StatusSide $pl={24}>
        <StatusItem>Slide 2 of 2</StatusItem>
        <StatusItem $ml={21}>English (United States)</StatusItem>
      </StatusSide>
      <StatusSide $pr={28}>
        <StatusItem><NotesI />Notes</StatusItem>
        <StatusItem $ml={20}><CommentI />Comments</StatusItem>
        <ViewActive><NormalI /></ViewActive>
        <StatusItem $ml={11}><GridI /></StatusItem>
        <StatusItem $ml={21}><PresentI /></StatusItem>
        <StatusItem $ml={19}><Minus /></StatusItem>
        <ZoomTrack><ZoomKnob /></ZoomTrack>
        <StatusItem $ml={8}><Plus /></StatusItem>
        <StatusItem $ml={17}>138%</StatusItem>
        <StatusItem $ml={20}><FitI /></StatusItem>
      </StatusSide>
    </StatusBar>
  </Page>
);

export default App;
